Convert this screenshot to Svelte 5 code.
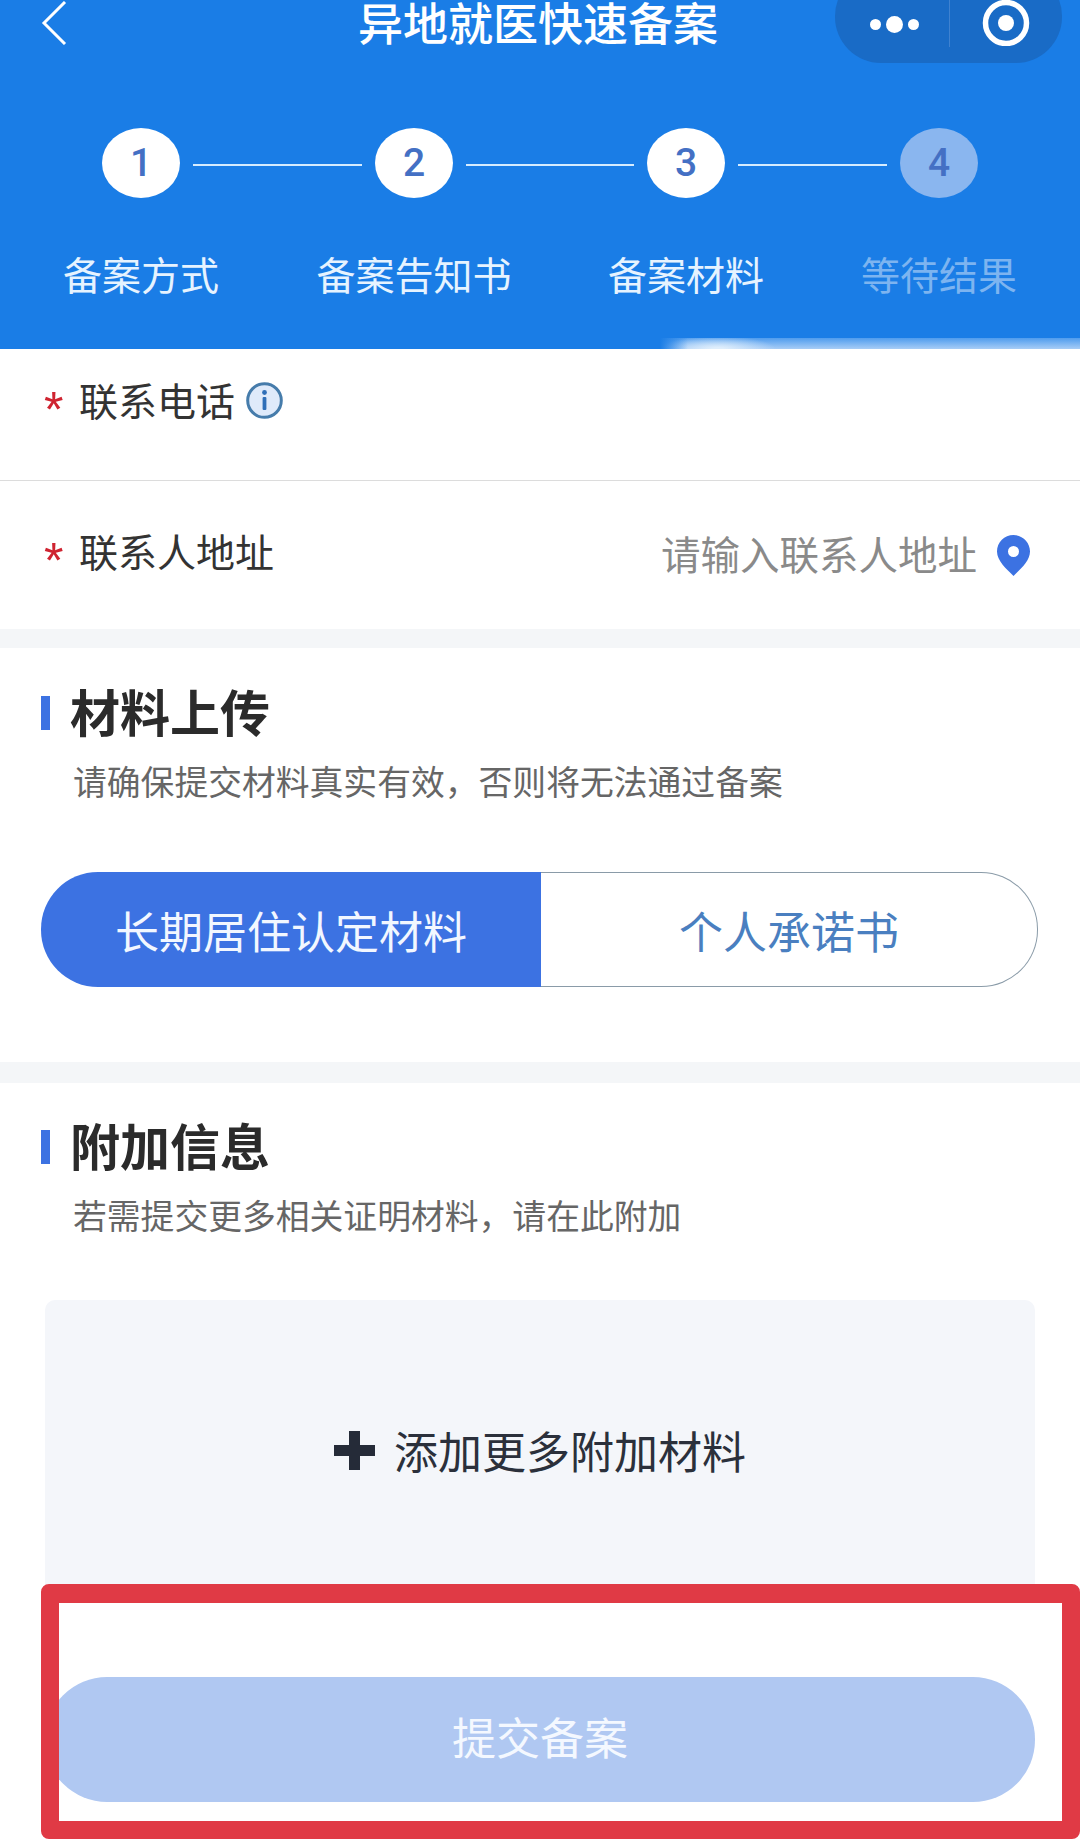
<script>
  const steps = [
    { n: 1, label: '备案方式' },
    { n: 2, label: '备案告知书' },
    { n: 3, label: '备案材料' },
    { n: 4, label: '等待结果', pending: true }
  ];
</script>

<div class="page">
  <header class="header">
    <div class="nav">
      <svg class="back" viewBox="0 0 26 44" width="26" height="44" aria-hidden="true">
        <path d="M24 1 L3 22 L24 43" fill="none" stroke="#fff" stroke-width="3" />
      </svg>
      <h1>异地就医快速备案</h1>
      <div class="capsule">
        <span class="dots"><i class="small"></i><i></i><i class="small"></i></span>
        <span class="sep"></span>
        <svg class="target" viewBox="0 0 48 46" width="48" height="46" aria-hidden="true">
          <circle cx="24" cy="23" r="20.5" fill="none" stroke="#fff" stroke-width="5.5" />
          <circle cx="24" cy="23" r="8" fill="#fff" />
        </svg>
      </div>
    </div>
    <div class="steps">
      {#each steps as s}
        <div class="step" class:pending={s.pending}>
          <span class="circle">{s.n}</span>
          <span class="label">{s.label}</span>
        </div>
      {/each}
    </div>
    <div class="glow"></div>
  </header>

  <section class="form">
    <div class="row first">
      <span class="star">*</span>
      <span class="name">联系电话</span>
      <svg class="info" viewBox="0 0 37 37" width="37" height="37" aria-hidden="true">
        <circle cx="18.5" cy="18.5" r="16.8" fill="#dfeafa" stroke="#467cab" stroke-width="3" />
        <circle cx="18.5" cy="10.5" r="2.4" fill="#2f6fb8" />
        <rect x="16.6" y="15" width="3.8" height="13" rx="1" fill="#2f6fb8" />
      </svg>
    </div>
    <div class="row second">
      <span class="star">*</span>
      <span class="name">联系人地址</span>
      <span class="placeholder">请输入联系人地址</span>
      <svg class="pin" viewBox="0 0 33 41" width="33" height="41" aria-hidden="true">
        <path fill-rule="evenodd" fill="#3c72e2" d="M16.5 0C7.4 0 0 7.4 0 16.5 0 26 9.5 34 16.5 41 23.5 34 33 26 33 16.5 33 7.4 25.6 0 16.5 0ZM16.5 11a5.5 5.5 0 1 1 0 11 5.5 5.5 0 0 1 0-11Z" />
      </svg>
    </div>
  </section>

  <section class="card upload">
    <h2>材料上传</h2>
    <p>请确保提交材料真实有效&#xFF0C;否则将无法通过备案</p>
    <div class="tabs">
      <div class="tab active">长期居住认定材料</div>
      <div class="tab">个人承诺书</div>
    </div>
  </section>

  <section class="card extra">
    <h2>附加信息</h2>
    <p>若需提交更多相关证明材料&#xFF0C;请在此附加</p>
    <div class="dropzone">
      <svg class="plus" viewBox="0 0 41 39" width="41" height="39" aria-hidden="true">
        <path fill="#252b38" d="M15 0h11v14h15v11H26v14H15V25H0V14h15Z" />
      </svg>
      <span>添加更多附加材料</span>
    </div>
  </section>

  <footer class="footer">
    <button class="submit" type="button">提交备案</button>
  </footer>
</div>

<style>
  :global(body) {
    margin: 0;
    background: #fff;
  }

  .page {
    position: relative;
    width: 1080px;
    height: 1839px;
    overflow: hidden;
    background: #fff;
    font-family: "Noto Sans CJK SC", "Noto Sans", sans-serif;
    color: #333;
  }

  .header {
    position: relative;
    height: 349px;
    background: #1a7de6;
    color: #fff;
  }

  .nav {
    position: relative;
    height: 64px;
    display: flex;
    justify-content: center;
  }

  .back {
    position: absolute;
    left: 41px;
    top: 1px;
  }

  h1 {
    margin: 0 4px 0 0;
    font-size: 45px;
    font-weight: 500;
    line-height: 44px;
  }

  .capsule {
    position: absolute;
    left: 835px;
    top: -30px;
    width: 227px;
    height: 93px;
    box-sizing: border-box;
    padding-top: 30px;
    border-radius: 46px;
    background: #196bc6;
    display: flex;
    align-items: flex-start;
  }

  .dots {
    width: 114px;
    height: 48px;
    box-sizing: border-box;
    padding-left: 4px;
    display: flex;
    align-items: center;
    justify-content: center;
    gap: 5px;
  }

  .dots i {
    width: 17px;
    height: 17px;
    border-radius: 50%;
    background: #fff;
  }

  .dots i.small {
    width: 11px;
    height: 11px;
  }

  .sep {
    width: 1px;
    height: 47px;
    background: #3f82d0;
  }

  .target {
    margin-left: 32px;
  }

  .steps {
    display: flex;
    margin: 64px 0 0 41px;
  }

  .step {
    position: relative;
    flex: none;
    display: flex;
    flex-direction: column;
    align-items: center;
    width: 200px;
    margin-right: 73px;
  }

  .step:nth-child(2) {
    margin-right: 72px;
  }

  .step:nth-child(3) {
    margin-right: 53px;
  }

  .step:last-child {
    margin-right: 0;
  }

  .step::after {
    content: "";
    position: absolute;
    top: 36px;
    left: 152px;
    width: 169px;
    height: 2px;
    background: #d6ecff;
  }

  .step:nth-child(2)::after {
    width: 168px;
  }

  .step:nth-child(3)::after {
    width: 149px;
  }

  .step:last-child::after {
    display: none;
  }

  .circle {
    width: 78px;
    height: 70px;
    border-radius: 50%;
    background: #fff;
    color: #4470c4;
    font-family: Roboto, "Liberation Sans", sans-serif;
    font-size: 39px;
    font-weight: 500;
    display: flex;
    align-items: center;
    justify-content: center;
  }

  .label {
    margin-top: 50px;
    font-size: 39px;
    line-height: 50px;
    white-space: nowrap;
    color: #e6f3ff;
  }

  .pending .circle {
    background: #8ab6ef;
  }

  .pending .label {
    color: #7db4f0;
  }

  .glow {
    position: absolute;
    left: 660px;
    right: 0;
    bottom: 0;
    height: 11px;
    background:
      linear-gradient(90deg, #1a7de6 0, rgba(26, 125, 230, 0) 28px),
      radial-gradient(ellipse 58px 13px at 58px 100%, #dfeefc 10%, rgba(223, 238, 252, 0) 100%),
      linear-gradient(180deg, #4f9cee, #a8cdf6);
  }

  .form {
    border-bottom: 19px solid #f4f6f8;
  }

  .row {
    display: flex;
    padding: 0 50px 0 44px;
  }

  .row.first {
    height: 132px;
    padding-top: 24px;
    box-sizing: border-box;
    border-bottom: 1px solid #dcdcdc;
  }

  .row.second {
    height: 148px;
    padding-top: 43px;
    box-sizing: border-box;
  }

  .star {
    width: 35px;
    color: #cf2330;
    font-family: "Liberation Sans", Arial, sans-serif;
    font-size: 50px;
    line-height: 74px;
  }

  .name {
    font-size: 39px;
    line-height: 52px;
    color: #333;
  }

  .info {
    margin: 9px 0 0 11px;
  }

  .placeholder {
    margin: 3px 0 0 auto;
    font-size: 39.5px;
    line-height: 52px;
    color: #8a8a8a;
  }

  .pin {
    margin: 11px 0 0 20px;
    flex: none;
  }

  .card h2 {
    position: relative;
    margin: 0;
    padding-left: 70px;
    font-size: 50px;
    line-height: 60px;
    font-weight: 700;
    color: #2b2b2b;
  }

  .card h2::before {
    content: "";
    position: absolute;
    left: 41px;
    top: 16px;
    width: 9px;
    height: 34px;
    background: #3c72e2;
  }

  .card p {
    margin: 18px 0 0;
    padding-left: 73px;
    font-size: 33.8px;
    line-height: 46px;
    color: #666;
  }

  .upload {
    height: 414px;
    box-sizing: border-box;
    padding-top: 32px;
  }

  .tabs {
    display: flex;
    width: 997px;
    height: 115px;
    margin: 68px 0 0 41px;
    font-size: 44px;
  }

  .tab {
    flex: 1;
    box-sizing: border-box;
    display: flex;
    align-items: center;
    justify-content: center;
    color: #4a7fc0;
    border: 1px solid #8a9ba8;
    border-left: 0;
    border-radius: 0 57px 57px 0;
  }

  .tab.active {
    flex: none;
    width: 500px;
    border: 0;
    border-radius: 57px 0 0 57px;
    background: #3c72e2;
    color: #f2f7ff;
  }

  .extra {
    border-top: 21px solid #f4f6f8;
    padding-top: 31px;
  }

  .dropzone {
    display: flex;
    align-items: center;
    justify-content: center;
    gap: 19px;
    height: 300px;
    width: 990px;
    margin: 62px 0 0 45px;
    padding-bottom: 14px;
    border-radius: 10px;
    background: #f4f6fa;
    font-size: 44px;
    color: #2b303b;
  }

  .footer {
    position: absolute;
    left: 41px;
    right: 0;
    top: 1584px;
    bottom: 0;
    box-sizing: border-box;
    padding-top: 74px;
    background: #fff;
    border: 18px solid #e03a45;
    border-top-width: 19px;
    border-radius: 8px;
    overflow: hidden;
  }

  .submit {
    display: block;
    width: 990px;
    height: 125px;
    margin-left: -14px;
    padding: 0 0 8px;
    border: 0;
    border-radius: 62px;
    background: #b0c8f2;
    color: #f4f8ff;
    font-family: inherit;
    font-size: 44px;
  }
</style>
